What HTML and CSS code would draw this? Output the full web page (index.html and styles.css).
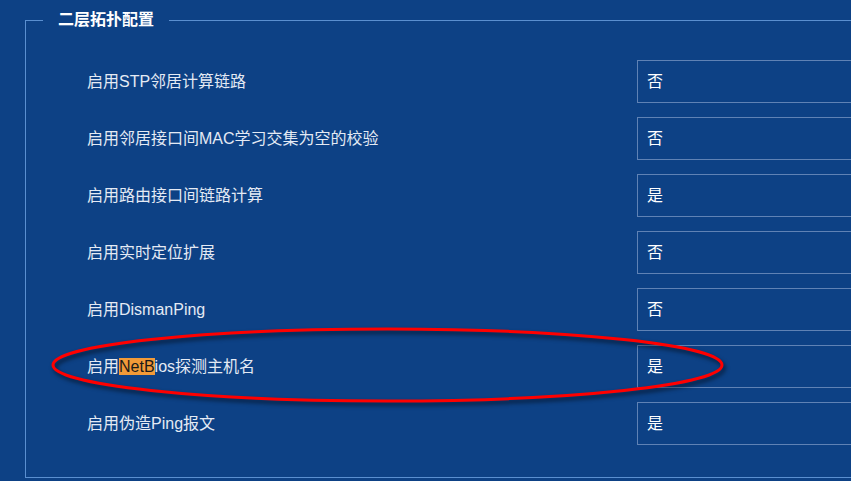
FILE: index.html
```html
<!DOCTYPE html>
<html lang="zh-CN">
<head>
    <meta charset="UTF-8">
    <meta name="viewport" content="width=device-width, initial-scale=1.0">
    <title>二层拓扑配置</title>
    <link rel="stylesheet" href="styles.css">
</head>
<body>
    <fieldset class="panel">
        <legend>二层拓扑配置</legend>
        <div class="row">
            <label>启用STP邻居计算链路</label>
            <div class="select">否</div>
        </div>
        <div class="row">
            <label>启用邻居接口间MAC学习交集为空的校验</label>
            <div class="select">否</div>
        </div>
        <div class="row">
            <label>启用路由接口间链路计算</label>
            <div class="select">是</div>
        </div>
        <div class="row">
            <label>启用实时定位扩展</label>
            <div class="select">否</div>
        </div>
        <div class="row">
            <label>启用DismanPing</label>
            <div class="select">否</div>
        </div>
        <div class="row">
            <label>启用<span class="mark">NetB</span>ios探测主机名</label>
            <div class="select">是</div>
        </div>
        <div class="row">
            <label>启用伪造Ping报文</label>
            <div class="select">是</div>
        </div>
    </fieldset>

    <!-- red annotation circled around the NetBios row -->
    <svg class="circle" width="851" height="481" viewBox="0 0 851 481">
        <ellipse cx="387.5" cy="365" rx="334.5" ry="36" fill="none" stroke="#ff0000" stroke-width="3"/>
    </svg>
</body>
</html>
```

FILE: styles.css
```css
html, body {
    margin: 0;
    height: 100%;
    overflow: hidden;
}
body {
    position: relative;
    background-color: #0d4185;
    font-family: "Liberation Sans", "Noto Sans CJK SC", sans-serif;
    color: #e4eaf4;
    padding-top: 10px;
    box-sizing: border-box;
}
.panel {
    margin: 0 0 0 25px;
    width: 826px;
    padding: 30px 0 32px 17px;
    border: 1px solid #5a8fd0;
    border-right: none;
    box-sizing: border-box;
    min-width: 0;
}
.panel legend {
    padding: 0 15px;
    font-size: 16px;
    line-height: 20px;
    font-weight: bold;
    color: #ffffff;
}
.row {
    display: flex;
    align-items: center;
    height: 43px;
    margin-bottom: 14px;
}
.row:last-child {
    margin-bottom: 0;
}
.row label {
    width: 550px;
    margin-left: 44px;
    padding-bottom: 4px;
    font-size: 16px;
}
.select {
    flex: 1;
    height: 43px;
    box-sizing: border-box;
    border: 1px solid #5f82b5;
    border-right: none;
    padding: 0 0 4px 9px;
    display: flex;
    align-items: center;
    font-size: 16px;
    color: #ffffff;
}
.mark {
    background-color: #f29a38;
    color: #1a1a1a;
}
.circle {
    position: absolute;
    left: 0;
    top: 0;
    pointer-events: none;
    filter: drop-shadow(2px 3px 2px rgba(0, 0, 0, 0.6));
}
```
